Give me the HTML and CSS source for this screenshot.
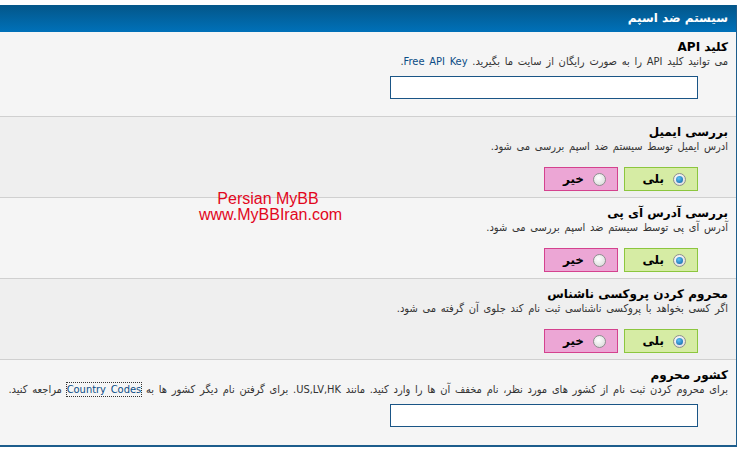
FILE: index.html
```html
<!DOCTYPE html>
<html>
	<head>
		<meta charset="UTF-8">
		<title>سیستم ضد اسپم</title>
		<link rel="stylesheet" href="styles.css">
	</head>
	<body>
		<div id="panel" dir="rtl">
			<div class="thead">سیستم ضد اسپم</div>

			<div class="row light tall">
				<div class="title">کلید API</div>
				<div class="desc">می توانید کلید API را به صورت رایگان از سایت ما بگیرید. <a href="#">Free API Key</a>.</div>
				<div class="field"><input type="text" class="box"></div>
			</div>

			<div class="row dark">
				<div class="title">بررسی ایمیل</div>
				<div class="desc">ادرس ایمیل توسط سیستم ضد اسپم بررسی می شود.</div>
				<div class="field pick">
					<label class="yes"><span class="radio on"></span>بلی</label>
					<label class="no"><span class="radio"></span>خیر</label>
				</div>
			</div>

			<div class="row light">
				<div class="title">بررسی آدرس آی پی</div>
				<div class="desc">آدرس آی پی توسط سیستم ضد اسپم بررسی می شود.</div>
				<div class="field pick">
					<label class="yes"><span class="radio on"></span>بلی</label>
					<label class="no"><span class="radio"></span>خیر</label>
				</div>
			</div>

			<div class="row dark">
				<div class="title">محروم کردن پروکسی ناشناس</div>
				<div class="desc">اگر کسی بخواهد با پروکسی ناشناسی ثبت نام کند جلوی آن گرفته می شود.</div>
				<div class="field pick">
					<label class="yes"><span class="radio on"></span>بلی</label>
					<label class="no"><span class="radio"></span>خیر</label>
				</div>
			</div>

			<div class="row light tall last">
				<div class="title">کشور محروم</div>
				<div class="desc">برای محروم کردن ثبت نام از کشور های مورد نظر، نام مخفف آن ها را وارد کنید. مانند US,LV,HK. برای گرفتن نام دیگر کشور ها به <a href="#" class="focus">Country Codes</a> مراجعه کنید.</div>
				<div class="field"><input type="text" class="box"></div>
			</div>

			<!-- واترمارک -->
			<div class="mark">Persian MyBB<br>www.MyBBIran.com</div>
		</div>
	</body>
</html>
```

FILE: styles.css
```css
*{
	margin: 0;
	padding: 0;
	box-sizing: border-box;
}
body{
	background: #fff;
	font-family: Tahoma, "DejaVu Sans", sans-serif;
	font-size: 11px;
	color: #333;
	padding-top: 5px;
}
#panel{
	width: 737px;
	border-right: 1px solid #1d5d8c;
	border-bottom: 2px solid #1d5d8c;
	position: relative;
}
.thead{
	height: 27px;
	line-height: 27px;
	padding-right: 8px;
	color: #fff;
	font-weight: bold;
	font-size: 12px;
	background: linear-gradient(#035689, #0071b9);
}
.row{
	border-bottom: 1px solid #d0d0d0;
	padding: 7px 8px 0 0;
	height: 81px;
}
.row.light{
	background: #f5f5f5;
}
.row.dark{
	background: #efefef;
}
.row.tall{
	height: 85px;
}
.row.last{
	border-bottom: 0;
}
.title{
	color: #000;
	font-weight: bold;
	font-size: 12px;
	line-height: 16px;
}
.desc{
	font-family: Tahoma, "DejaVu Sans Condensed", "DejaVu Sans", sans-serif;
	word-spacing: 1.6px;
	line-height: 14px;
}
.desc a{
	color: #0b4c85;
	text-decoration: none;
}
.desc a.focus{
	outline: 1px dotted #333;
}
.field{
	display: flex;
	gap: 6px;
	padding-right: 30px;
	margin-top: 7px;
}
.field.pick{
	margin-top: 13px;
}
.box{
	width: 308px;
	height: 23px;
	border: 1px solid #1a5586;
	background: #fff;
}
.field label{
	width: 74px;
	height: 24px;
	display: flex;
	align-items: center;
	gap: 9px;
	padding-right: 11px;
	font-weight: bold;
	font-size: 12px;
	color: #000;
}
.yes{
	background: #d6eca4;
	border: 1px solid #8cc63e;
}
.no{
	background: #eca6d5;
	border: 1px solid #d4428e;
}
.radio{
	width: 13px;
	height: 13px;
	border-radius: 50%;
	border: 1px solid #8e8f8f;
	background: radial-gradient(circle at 40% 35%, #fff, #d4d4d4);
	position: relative;
}
.radio.on:after{
	content: "";
	position: absolute;
	left: 2px;
	top: 2px;
	width: 7px;
	height: 7px;
	border-radius: 50%;
	background: radial-gradient(circle at 40% 35%, #5fc3f7, #0a5d9e);
}
.mark{
	position: absolute;
	left: 199px;
	top: 186px;
	width: 138px;
	text-align: center;
	direction: ltr;
	font-family: "Liberation Sans", Arial, sans-serif;
	font-size: 16px;
	line-height: 16px;
	color: #e2061c;
}
```
